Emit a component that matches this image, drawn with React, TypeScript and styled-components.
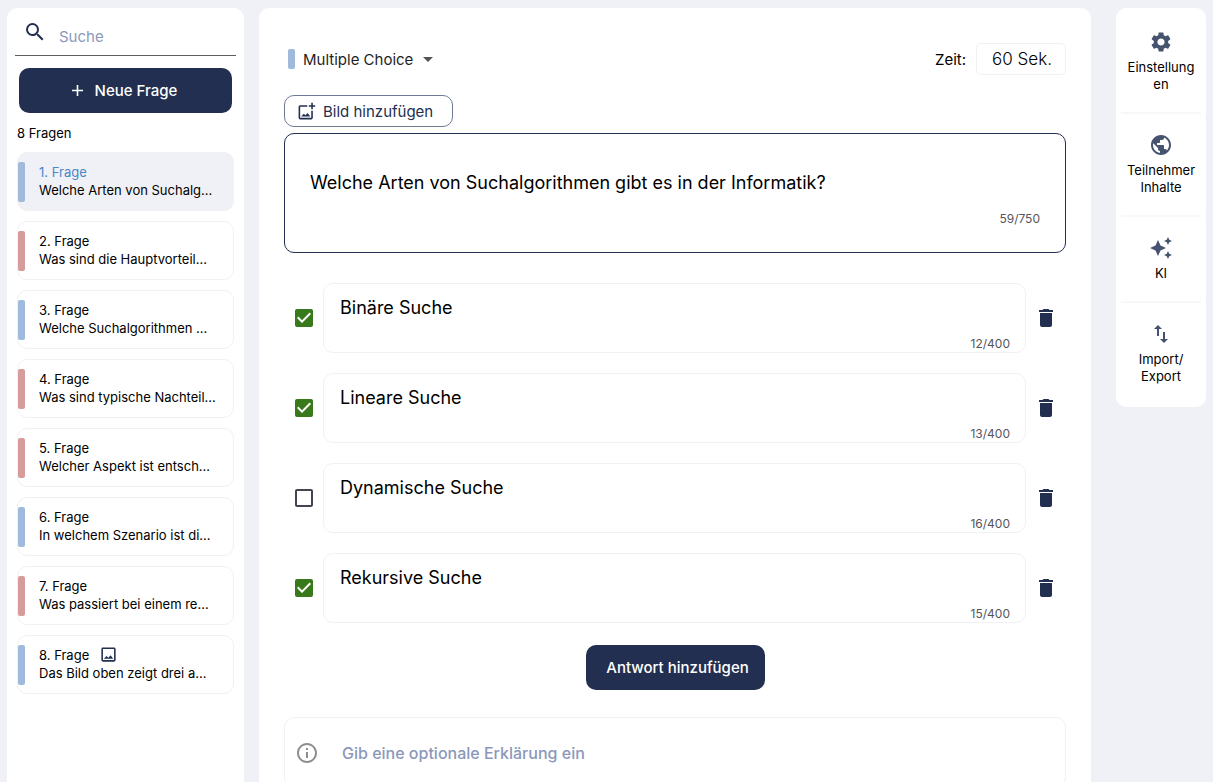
import React, { useState } from "react";
import styled, { createGlobalStyle } from "styled-components";
import {
  MdAdd,
  MdArrowDropDown,
  MdAutoAwesome,
  MdCheckBox,
  MdCheckBoxOutlineBlank,
  MdDelete,
  MdImportExport,
  MdInfoOutline,
  MdPublic,
  MdSearch,
  MdSettings,
} from "react-icons/md";

const navy = "#232f50";
const page = "#f0f1f6";
const line = "#f1f1f4";
const muted = "#8b98bb";
const blue = "#9fbada";
const red = "#d69c9c";

const GlobalStyle = createGlobalStyle`
  *, *::before, *::after { box-sizing: border-box; }
  body {
    margin: 0;
    background: ${page};
    color: #000;
    font-family: Inter, "Open Sans", sans-serif;
    font-size: 13px;
  }
  button, input, select, textarea { font: inherit; color: inherit; margin: 0; }
  button { cursor: pointer; }
  svg { display: block; flex: none; }
`;

const Shell = styled.div`
  display: flex;
  align-items: flex-start;
  height: 100vh;
  padding: 8px 7px 0;
`;

const Panel = styled.div`
  height: 100%;
  overflow-y: auto;
  scrollbar-width: none;
  background: #fff;
  border-radius: 10px 10px 0 0;
`;

const Sidebar = styled(Panel).attrs({ as: "aside" })`
  flex: none;
  width: 237px;
  padding: 0 8px;
`;

const Editor = styled(Panel).attrs({ as: "main" })`
  flex: 1;
  min-width: 0;
  margin: 0 25px 0 15px;
  padding: 35px 25px 0;
`;

const SearchBox = styled.label`
  display: flex;
  align-items: flex-start;
  height: 48px;
  padding: 12px 8px 0;
  border-bottom: 1px solid #5c5c62;
  color: ${navy};
`;

const SearchInput = styled.input`
  flex: 1;
  min-width: 0;
  height: 32px;
  margin-left: 12px;
  padding: 0;
  border: 0;
  outline: 0;
  background: none;
  font-size: 15px;
  &::placeholder { color: ${muted}; opacity: 1; }
`;

const PrimaryButton = styled.button`
  display: flex;
  align-items: center;
  justify-content: center;
  height: 45px;
  border: 0;
  border-radius: 10px;
  background: ${navy};
  color: #fff;
  font-size: 15px;
  font-weight: 500;
`;

const NewButton = styled(PrimaryButton)`
  gap: 8px;
  width: calc(100% - 8px);
  margin: 12px 4px 0;
  padding: 0 12px 0 6px;
`;

const Count = styled.p`
  margin: 11px 2px 10px;
  line-height: 18px;
`;

const QuestionList = styled.ol`
  display: flex;
  flex-direction: column;
  gap: 10px;
  margin: 0 2px;
  padding: 0 0 20px;
  list-style: none;
`;

const QuestionCard = styled.button<{ $active: boolean }>`
  display: flex;
  align-items: center;
  width: 100%;
  height: 59px;
  padding: 0;
  border: 1px solid ${line};
  border-radius: 10px;
  background: ${(p) => (p.$active ? page : "#fff")};
  text-align: left;
  line-height: 18px;
`;

const Marker = styled.span<{ $color: string; $side?: boolean }>`
  flex: none;
  width: 7px;
  height: ${(p) => (p.$side ? 40 : 20)}px;
  border-radius: 2px;
  background: ${(p) => p.$color};
`;

const CardText = styled.span`
  flex: 1;
  min-width: 0;
  margin-left: 14px;
  padding-bottom: 2px;
  white-space: nowrap;
`;

const CardTitle = styled.span<{ $active: boolean }>`
  display: flex;
  align-items: center;
  gap: 10px;
  color: ${(p) => (p.$active ? "#4a86c5" : "#000")};
  svg { color: ${navy}; }
`;

const Header = styled.div`
  display: flex;
  align-items: center;
  justify-content: space-between;
  height: 32px;
`;

const TypePicker = styled.label`
  display: flex;
  align-items: center;
  gap: 8px;
  padding-left: 4px;
`;

const SelectWrap = styled.span`
  display: grid;
  align-items: center;
  color: #1f1f1f;
  > * { grid-area: 1 / 1; }
  svg { justify-self: end; pointer-events: none; color: #555; }
`;

const TypeSelect = styled.select`
  appearance: none;
  height: 32px;
  padding: 0 26px 0 0;
  border: 0;
  background: none;
  font-size: 15px;
`;

const TimeField = styled.label`
  display: flex;
  align-items: center;
  gap: 10px;
  font-size: 15px;
`;

const TimeInput = styled.input`
  width: 90px;
  height: 32px;
  padding: 0 13px 0 0;
  border: 1px solid ${line};
  border-radius: 5px;
  background: none;
  font-size: 17px;
  font-weight: 300;
  text-align: right;
`;

const OutlineButton = styled.button`
  display: flex;
  align-items: center;
  gap: 7px;
  min-width: 169px;
  height: 32px;
  margin: 20px 0 6px;
  padding: 0 12px;
  border: 1px solid #6e7a98;
  border-radius: 10px;
  background: #fff;
  color: ${navy};
  font-size: 15px;
`;

const QuestionBox = styled.div`
  display: flex;
  flex-direction: column;
  height: 120px;
  padding: 36px 25px 0;
  border: 1px solid ${navy};
  border-radius: 10px;
`;

const TextArea = styled.textarea`
  display: block;
  width: 100%;
  padding: 0;
  border: 0;
  outline: 0;
  resize: none;
  overflow: hidden;
  background: none;
  font-size: 18px;
  line-height: 26px;
`;

const Counter = styled.span`
  align-self: flex-end;
  margin-top: 15px;
  color: #55555c;
  font-size: 12px;
  line-height: 16px;
`;

const Answers = styled.ul`
  display: flex;
  flex-direction: column;
  gap: 20px;
  margin: 30px 0 22px;
  padding: 0;
  list-style: none;
`;

const AnswerRow = styled.li`
  display: grid;
  grid-template-columns: 39px minmax(0, 1fr) 40px;
  align-items: center;
`;

const Check = styled.label<{ $on: boolean }>`
  display: grid;
  place-items: center;
  color: ${(p) => (p.$on ? "#37791b" : "#45434f")};
  > * { grid-area: 1 / 1; }
  input { width: 18px; height: 18px; opacity: 0; }
`;

const AnswerBox = styled.div`
  display: flex;
  flex-direction: column;
  height: 70px;
  padding: 11px 15px 0 16px;
  border: 1px solid ${line};
  border-radius: 10px;
`;

const IconButton = styled.button`
  display: grid;
  place-items: center;
  width: 40px;
  height: 40px;
  padding: 0;
  border: 0;
  background: none;
  color: ${navy};
`;

const AddAnswer = styled(PrimaryButton)`
  min-width: 179px;
  margin: 0 auto 27px;
  padding: 0 13px 0 18px;
`;

const Explanation = styled.label`
  display: flex;
  align-items: center;
  gap: 23px;
  height: 71px;
  padding: 0 10px;
  border: 1px solid ${line};
  border-radius: 10px;
  color: #8e8e8e;
`;

const ExplanationInput = styled.input`
  flex: 1;
  min-width: 0;
  height: 32px;
  padding: 0;
  border: 0;
  outline: 0;
  background: none;
  font-size: 16px;
  font-weight: 500;
  &::placeholder { color: ${muted}; opacity: 1; }
`;

const Rail = styled.nav`
  flex: none;
  width: 90px;
  padding: 3px 5px;
  border-radius: 10px;
  background: #fff;
`;

const RailButton = styled.button`
  display: flex;
  flex-direction: column;
  align-items: center;
  gap: 5px;
  width: 100%;
  padding: 19px 0;
  border: 0;
  background: none;
  line-height: 17px;
  color: #000;
  svg { color: #46536f; }
  & + & { border-top: 2px solid #f8f8fa; }
`;

function ImageIcon() {
  return (
    <svg width="19" height="19" viewBox="0 0 24 24" fill="currentColor" aria-hidden="true">
      <path d="M19 5v14H5V5h14m0-2H5c-1.1 0-2 .9-2 2v14c0 1.1.9 2 2 2h14c1.1 0 2-.9 2-2V5c0-1.1-.9-2-2-2z" />
      <path d="M6 17.4h12l-3.4-4.6-2.8 3.2-2.2-2.1z" />
    </svg>
  );
}

function AddImageIcon() {
  return (
    <svg width="19" height="19" viewBox="0 0 24 24" fill="currentColor" aria-hidden="true">
      <path d="M18 20H4V6h9V4H4c-1.1 0-2 .9-2 2v14c0 1.1.9 2 2 2h14c1.1 0 2-.9 2-2v-9h-2v9z" />
      <path d="M5.2 18.2h11.6l-3.4-4.4-2.7 3-2.1-2z" />
      <path d="M20 4V1h-2v3h-3v2h3v3h2V6h3V4z" />
    </svg>
  );
}

const questions = [
  { text: "Welche Arten von Suchalg...", color: blue },
  { text: "Was sind die Hauptvorteil...", color: red },
  { text: "Welche Suchalgorithmen ...", color: blue },
  { text: "Was sind typische Nachteil...", color: red },
  { text: "Welcher Aspekt ist entsch...", color: red },
  { text: "In welchem Szenario ist di...", color: blue },
  { text: "Was passiert bei einem re...", color: red },
  { text: "Das Bild oben zeigt drei a...", color: blue, image: true },
];

const initialAnswers = [
  { text: "Binäre Suche", correct: true },
  { text: "Lineare Suche", correct: true },
  { text: "Dynamische Suche", correct: false },
  { text: "Rekursive Suche", correct: true },
];

const railItems = [
  { icon: MdSettings, lines: ["Einstellung", "en"] },
  { icon: MdPublic, lines: ["Teilnehmer", "Inhalte"] },
  { icon: MdAutoAwesome, lines: ["KI"] },
  { icon: MdImportExport, lines: ["Import/", "Export"] },
];

export default function App() {
  const [active, setActive] = useState(0);
  const [question, setQuestion] = useState(
    "Welche Arten von Suchalgorithmen gibt es in der Informatik?"
  );
  const [answers, setAnswers] = useState(initialAnswers);

  const update = (index: number, patch: Partial<(typeof initialAnswers)[number]>) =>
    setAnswers(answers.map((a, i) => (i === index ? { ...a, ...patch } : a)));

  return (
    <>
      <GlobalStyle />
      <Shell>
        <Sidebar>
          <SearchBox>
            <MdSearch size={24} />
            <SearchInput type="search" placeholder="Suche" aria-label="Suche" />
          </SearchBox>
          <NewButton type="button">
            <MdAdd size={19} />
            Neue Frage
          </NewButton>
          <Count>{questions.length} Fragen</Count>
          <QuestionList>
            {questions.map((q, i) => (
              <li key={q.text}>
                <QuestionCard type="button" $active={i === active} onClick={() => setActive(i)}>
                  <Marker $color={q.color} $side />
                  <CardText>
                    <CardTitle $active={i === active}>
                      {i + 1}. Frage
                      {q.image && <ImageIcon />}
                    </CardTitle>
                    {q.text}
                  </CardText>
                </QuestionCard>
              </li>
            ))}
          </QuestionList>
        </Sidebar>

        <Editor>
          <Header>
            <TypePicker>
              <Marker $color={blue} />
              <SelectWrap>
                <TypeSelect aria-label="Fragetyp">
                  <option>Multiple Choice</option>
                </TypeSelect>
                <MdArrowDropDown size={24} />
              </SelectWrap>
            </TypePicker>
            <TimeField>
              Zeit:
              <TimeInput type="text" defaultValue="60 Sek." />
            </TimeField>
          </Header>

          <OutlineButton type="button">
            <AddImageIcon />
            Bild hinzufügen
          </OutlineButton>

          <QuestionBox>
            <TextArea
              rows={1}
              aria-label="Frage"
              value={question}
              onChange={(e) => setQuestion(e.target.value)}
            />
            <Counter>{question.length}/750</Counter>
          </QuestionBox>

          <Answers>
            {answers.map((a, i) => (
              <AnswerRow key={i}>
                <Check $on={a.correct}>
                  <input
                    type="checkbox"
                    aria-label="Richtige Antwort"
                    checked={a.correct}
                    onChange={(e) => update(i, { correct: e.target.checked })}
                  />
                  {a.correct ? <MdCheckBox size={24} /> : <MdCheckBoxOutlineBlank size={24} />}
                </Check>
                <AnswerBox>
                  <TextArea
                    rows={1}
                    aria-label={`Antwort ${i + 1}`}
                    value={a.text}
                    onChange={(e) => update(i, { text: e.target.value })}
                  />
                  <Counter>{a.text.length}/400</Counter>
                </AnswerBox>
                <IconButton
                  type="button"
                  aria-label="Antwort löschen"
                  onClick={() => setAnswers(answers.filter((_, n) => n !== i))}
                >
                  <MdDelete size={24} />
                </IconButton>
              </AnswerRow>
            ))}
          </Answers>

          <AddAnswer
            type="button"
            onClick={() => setAnswers([...answers, { text: "", correct: false }])}
          >
            Antwort hinzufügen
          </AddAnswer>

          <Explanation>
            <MdInfoOutline size={24} />
            <ExplanationInput
              type="text"
              aria-label="Erklärung"
              placeholder="Gib eine optionale Erklärung ein"
            />
          </Explanation>
        </Editor>

        <Rail>
          {railItems.map(({ icon: Icon, lines }) => (
            <RailButton type="button" key={lines[0]}>
              <Icon size={24} />
              <span>
                {lines.map((text, i) => (
                  <React.Fragment key={text}>
                    {i > 0 && <br />}
                    {text}
                  </React.Fragment>
                ))}
              </span>
            </RailButton>
          ))}
        </Rail>
      </Shell>
    </>
  );
}
